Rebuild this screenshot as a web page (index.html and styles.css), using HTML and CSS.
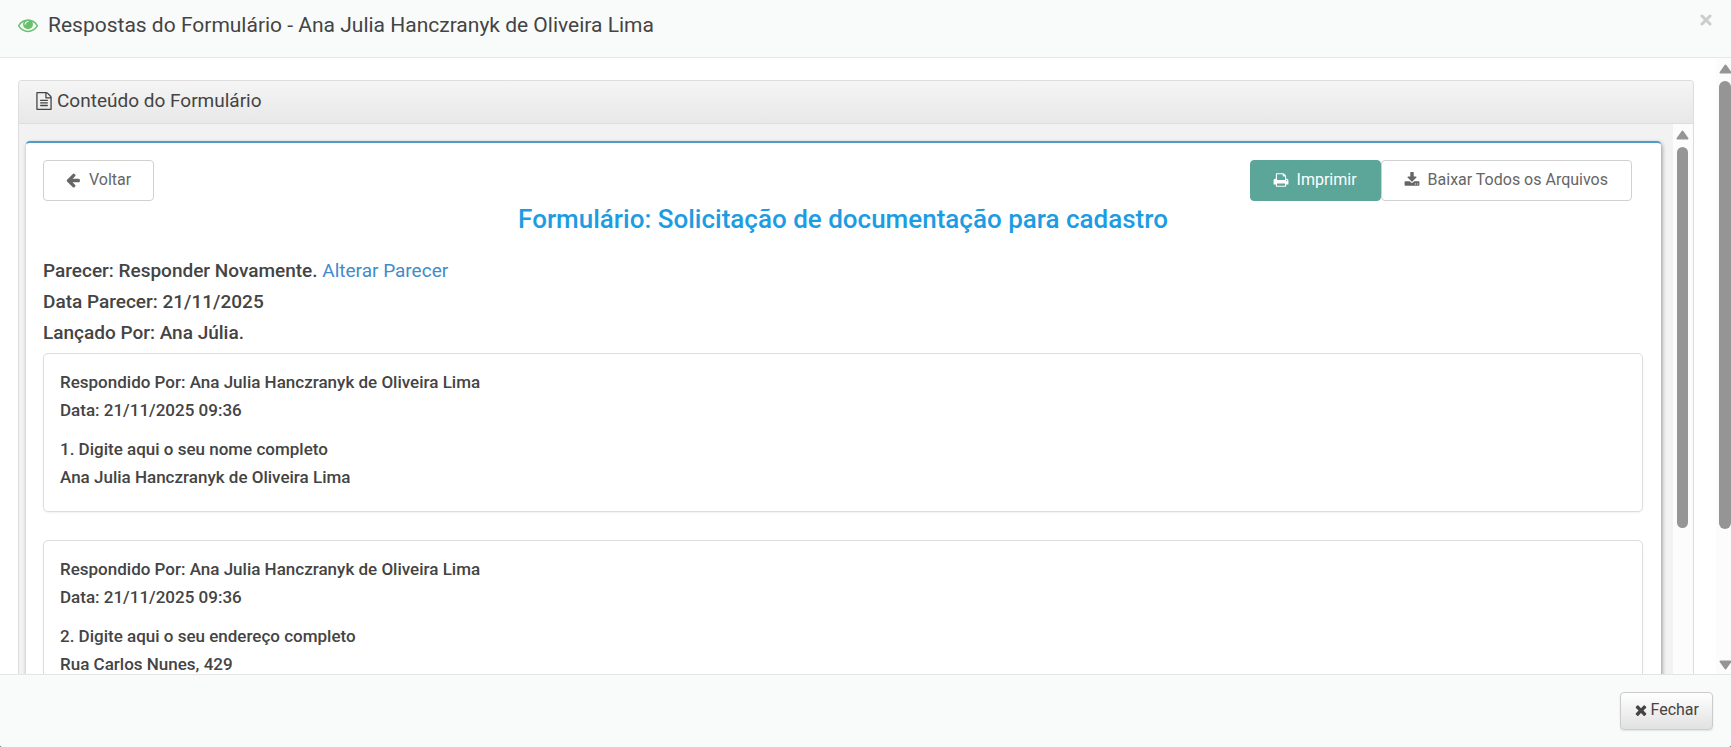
FILE: index.html
```html
<!DOCTYPE html>
<html lang="pt-BR">
<head>
  <meta charset="UTF-8" />
  <meta name="viewport" content="width=device-width, initial-scale=1.0" />
  <title>Respostas do Formulário</title>
  <link rel="stylesheet" href="styles.css">
</head>
<body>

  <div class="modal" role="dialog" aria-labelledby="modalTitle">
    <header class="modal-header">
      <svg class="icon icon-eye" viewBox="0 0 1792 1792"><path d="M1664 960q-152-236-381-353 61 104 61 225 0 185-131.500 316.500t-316.500 131.500-316.500-131.500-131.500-316.500q0-121 61-225-229 117-381 353 133 205 333.500 326.500t434.500 121.500 434.500-121.500 333.500-326.500zm-720-384q0-20-14-34t-34-14q-125 0-214.500 89.500t-89.500 214.500q0 20 14 34t34 14 34-14 14-34q0-86 61-147t147-61q20 0 34-14t14-34zm848 384q0 34-20 69-140 230-376.500 368.500t-499.500 138.500-499.500-139-376.500-368q-20-35-20-69t20-69q140-229 376.500-368t499.500-139 499.500 139 376.500 368q20 35 20 69z"/></svg>
      <h1 class="modal-title" id="modalTitle">Respostas do Formulário - Ana Julia Hanczranyk de Oliveira Lima</h1>
      <button class="close" type="button" aria-label="Fechar janela">
        <svg viewBox="0 0 12 12"><path d="M2 2l8 8M10 2l-8 8"/></svg>
      </button>
    </header>

    <div class="modal-body">
      <main class="modal-content">
        <section class="panel">
          <h2 class="panel-heading">
            <svg class="icon icon-file" viewBox="0 0 1792 1792"><path d="M1596 380q28 28 48 76t20 88v1152q0 40-28 68t-68 28h-1344q-40 0-68-28t-28-68v-1600q0-40 28-68t68-28h896q40 0 88 20t76 48zm-444-244v376h376q-10-29-22-41l-313-313q-12-12-41-22zm384 1528v-1024h-416q-40 0-68-28t-28-68v-416h-768v1536h1280zm-1024-864q0-14 9-23t23-9h704q14 0 23 9t9 23v64q0 14-9 23t-23 9h-704q-14 0-23-9t-9-23v-64zm736 224q14 0 23 9t9 23v64q0 14-9 23t-23 9h-704q-14 0-23-9t-9-23v-64q0-14 9-23t23-9h704zm0 256q14 0 23 9t9 23v64q0 14-9 23t-23 9h-704q-14 0-23-9t-9-23v-64q0-14 9-23t23-9h704z"/></svg>
            Conteúdo do Formulário
          </h2>

          <div class="panel-body">
            <div class="panel-scroll">
              <article class="card">
                <div class="toolbar">
                  <button class="btn" type="button">
                    <svg class="icon" viewBox="0 0 1792 1792"><path d="M1664 896v128q0 53-32.500 90.500t-84.500 37.500h-704l293 294q38 36 38 90t-38 90l-75 76q-37 37-90 37-52 0-91-37l-651-652q-37-37-37-90 0-52 37-91l651-650q38-38 91-38 52 0 90 38l75 74q38 38 38 91t-38 91l-293 293h704q52 0 84.500 37.500t32.500 90.500z"/></svg>
                    Voltar
                  </button>
                  <div class="toolbar-right">
                    <button class="btn btn-primary" type="button">
                      <svg class="icon" viewBox="0 0 1792 1792"><path d="M448 1536h896v-256h-896v256zm0-640h896v-384h-160q-40 0-68-28t-28-68v-160h-640v640zm1152 64q0-26-19-45t-45-19-45 19-19 45 19 45 45 19 45-19 19-45zm128 0v416q0 13-9.500 22.500t-22.500 9.500h-224v160q0 40-28 68t-68 28h-960q-40 0-68-28t-28-68v-160h-224q-13 0-22.500-9.500t-9.500-22.500v-416q0-79 56.500-135.500t135.500-56.500h64v-544q0-40 28-68t68-28h672q40 0 88 20t76 48l152 152q28 28 48 76t20 88v256h64q79 0 135.500 56.500t56.500 135.500z"/></svg>
                      Imprimir
                    </button>
                    <button class="btn" type="button">
                      <svg class="icon" viewBox="0 0 1792 1792"><path d="M1344 1344q0-26-19-45t-45-19-45 19-19 45 19 45 45 19 45-19 19-45zm256 0q0-26-19-45t-45-19-45 19-19 45 19 45 45 19 45-19 19-45zm128-224v320q0 40-28 68t-68 28h-1472q-40 0-68-28t-28-68v-320q0-40 28-68t68-28h465l135 136q58 56 136 56t136-56l136-136h464q40 0 68 28t28 68zm-325-569q17 41-14 70l-448 448q-18 19-45 19t-45-19l-448-448q-31-29-14-70 17-39 59-39h256v-448q0-26 19-45t45-19h256q26 0 45 19t19 45v448h256q42 0 59 39z"/></svg>
                      Baixar Todos os Arquivos
                    </button>
                  </div>
                </div>

                <h3 class="form-title">Formulário: Solicitação de documentação para cadastro</h3>

                <div class="review">
                  <p>Parecer: Responder Novamente. <a href="#">Alterar Parecer</a></p>
                  <p>Data Parecer: 21/11/2025</p>
                  <p>Lançado Por: Ana Júlia.</p>
                </div>

                <div class="answers">
                  <section class="answer">
                    <div>
                      <p>Respondido Por: Ana Julia Hanczranyk de Oliveira Lima</p>
                      <p>Data: 21/11/2025 09:36</p>
                    </div>
                    <div>
                      <p>1. Digite aqui o seu nome completo</p>
                      <p>Ana Julia Hanczranyk de Oliveira Lima</p>
                    </div>
                  </section>
                  <section class="answer">
                    <div>
                      <p>Respondido Por: Ana Julia Hanczranyk de Oliveira Lima</p>
                      <p>Data: 21/11/2025 09:36</p>
                    </div>
                    <div>
                      <p>2. Digite aqui o seu endereço completo</p>
                      <p>Rua Carlos Nunes, 429</p>
                    </div>
                  </section>
                </div>
              </article>
            </div>
            <div class="scrollbar scrollbar-inner" aria-hidden="true">
              <svg class="arrow" viewBox="0 0 13 10"><path d="M6.500 1.500L11.500 8.500H1.500Z"/></svg>
              <span class="thumb"></span>
            </div>
          </div>
        </section>
      </main>
      <div class="scrollbar scrollbar-outer" aria-hidden="true">
        <svg class="arrow" viewBox="0 0 13 10"><path d="M6.500 1.500L11.500 8.500H1.500Z"/></svg>
        <span class="thumb"></span>
        <svg class="arrow arrow-down" viewBox="0 0 13 10"><path d="M6.500 8.500L11.500 1.500H1.500Z"/></svg>
      </div>
    </div>

    <footer class="modal-footer">
      <button class="btn-close" type="button">
        <svg class="icon" viewBox="0 0 1792 1792"><path d="M1490 1322q0 40-28 68l-136 136q-28 28-68 28t-68-28l-294-294-294 294q-28 28-68 28t-68-28l-136-136q-28-28-28-68t28-68l294-294-294-294q-28-28-28-68t28-68l136-136q28-28 68-28t68 28l294 294 294-294q28-28 68-28t68 28l136 136q28 28 28 68t-28 68l-294 294 294 294q28 28 28 68z"/></svg>
        Fechar
      </button>
    </footer>
  </div>

</body>
</html>
```
FILE: styles.css
```css
* { box-sizing: border-box; }

body {
  margin: 0;
  background: #777;
  color: #444;
  font-family: Roboto, "Liberation Sans", sans-serif;
  font-size: 17px;
}

h1, h2, h3, p {
  margin: 0;
}

a {
  color: #428bca;
  font-weight: 400;
  text-decoration: none;
}

a:hover { text-decoration: underline; }

button {
  font-family: inherit;
  font-size: 16px;
  cursor: pointer;
}

.icon {
  flex: none;
  width: 16px;
  height: 16px;
  fill: currentColor;
}

/* Modal */
.modal {
  display: flex;
  flex-direction: column;
  height: 100vh;
  overflow: hidden;
  background: #fff;
  border-radius: 0 0 3px 3px;
}

.modal-header {
  display: flex;
  align-items: center;
  gap: 10px;
  flex: none;
  padding: 10px 18px 17px;
  background: #f9fbfa;
  border-bottom: 1px solid #e5e8e7;
}

.modal-title {
  flex: 1;
  font-size: 21px;
  font-weight: 400;
  line-height: 30px;
}

.icon-eye {
  width: 20px;
  height: 20px;
  color: #68c06e;
}

.close {
  align-self: flex-start;
  padding: 4px 1px;
  border: 0;
  background: none;
}

.close svg {
  display: block;
  width: 12px;
  height: 12px;
  fill: none;
  stroke: #ccc;
  stroke-width: 3;
  stroke-linecap: round;
}

.modal-body {
  display: flex;
  flex: 1;
  min-height: 0;
}

.modal-content {
  display: flex;
  flex: 1;
  min-width: 0;
  padding: 22px 22px 0 18px;
}

/* Panel */
.panel {
  display: flex;
  flex-direction: column;
  flex: 1;
  min-width: 0;
  border: 1px solid #ddd;
  border-bottom: 0;
  border-radius: 4px 4px 0 0;
  background: #f2f2f2;
}

.panel-heading {
  display: flex;
  align-items: center;
  gap: 4px;
  padding: 5px 16px 7px;
  border-bottom: 1px solid #ddd;
  border-radius: 3px 3px 0 0;
  background: linear-gradient(#f5f5f5, #e8e8e8);
  font-size: 19px;
  font-weight: 400;
  line-height: 30px;
}

.icon-file {
  width: 18px;
  height: 18px;
}

.panel-body {
  display: flex;
  flex: 1;
  min-height: 0;
}

.panel-scroll {
  flex: 1;
  min-width: 0;
  overflow: hidden;
  padding: 17px 12px 0 7px;
}

.card {
  padding: 17px 18px 30px 17px;
  border-top: 2px solid #4d9dcb;
  border-radius: 4px;
  background: #fff;
  box-shadow: 1px 2px 4px rgba(0, 0, 0, 0.4);
}

/* Buttons */
.toolbar {
  display: flex;
  justify-content: space-between;
  padding-right: 11px;
}

.toolbar-right { display: flex; }

.btn {
  display: flex;
  align-items: center;
  gap: 8px;
  padding: 7px 22px 9px 21px;
  border: 1px solid #d0d0d0;
  border-radius: 4px;
  background: #fff;
  color: #666;
  line-height: 23px;
}

.toolbar-right .btn {
  padding-right: 23px;
  padding-left: 22px;
}

.toolbar-right .btn-primary {
  border-color: #5ba599;
  background: #5ba599;
  color: #fff;
}

.btn-close {
  display: flex;
  align-items: center;
  gap: 2px;
  padding: 5px 13px 7px 12px;
  border: 1px solid #ccc;
  border-radius: 4px;
  background: linear-gradient(#fff, #e1e1e1);
  box-shadow: 0 1px 2px rgba(0, 0, 0, 0.1);
  color: #444;
  line-height: 24px;
}

/* Form answers */
.form-title {
  color: #1c9ce2;
  font-size: 26px;
  font-weight: 500;
  line-height: 36px;
  text-align: center;
}

.review {
  padding: 18px 0 5px;
  font-size: 19px;
  font-weight: 500;
  line-height: 31px;
}

.answers {
  display: flex;
  flex-direction: column;
  gap: 28px;
}

.answer {
  display: flex;
  flex-direction: column;
  gap: 11px;
  padding: 14px 16px 20px;
  border: 1px solid #ddd;
  border-radius: 5px;
  box-shadow: 0 1px 2px rgba(0, 0, 0, 0.06);
  font-weight: 500;
  line-height: 28px;
}

/* Scrollbars */
.scrollbar {
  display: flex;
  flex-direction: column;
  flex: none;
  background: #fcfcfc;
}

.scrollbar-inner {
  align-items: center;
  width: 20px;
  padding: 6px 1px 0 0;
}

.scrollbar-outer {
  width: 15px;
  padding: 6px 0 4px 3px;
  overflow: hidden;
}

.arrow {
  flex: none;
  width: 13px;
  height: 10px;
  margin-bottom: 7px;
  fill: #959595;
  stroke: #959595;
  stroke-width: 2;
  stroke-linejoin: round;
}

.arrow-down { margin: auto 0 0; }

.thumb {
  flex: none;
  width: 11px;
  border-radius: 6px;
  background: #959595;
}

.scrollbar-inner .thumb { height: 70%; }

.scrollbar-outer .thumb {
  width: 12px;
  height: 74%;
}

/* Footer */
.modal-footer {
  display: flex;
  justify-content: flex-end;
  flex: none;
  padding: 17px 18px;
  border-top: 1px solid #e5e5e5;
  background: #f9fbfa;
}
```
